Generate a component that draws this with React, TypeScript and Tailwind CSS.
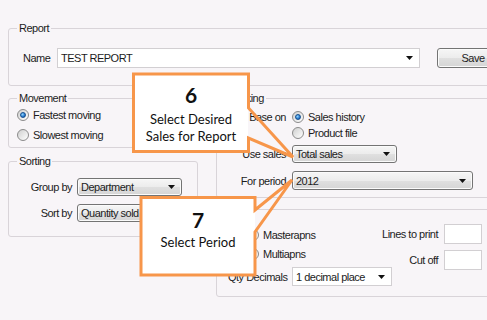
import React from "react";

const Arrow = () => (
  <svg width="7" height="4" viewBox="0 0 7 4" className="shrink-0">
    <path d="M0 0H7L3.5 4Z" fill="#111" />
  </svg>
);

const VCombo = ({ className, children }: { className: string; children: React.ReactNode }) => (
  <div
    className={`flex shrink-0 items-center justify-between rounded-[3px] border border-[#747474] bg-[linear-gradient(#f6f6f6_0%,#ececec_50%,#e0e0e0_50%,#d5d5d5_100%)] pl-[3px] pr-[6px] shadow-[inset_0_0_0_1px_#fbfbfb] ${className}`}
  >
    <span className="whitespace-nowrap">{children}</span>
    <Arrow />
  </div>
);

const WCombo = ({ className, children }: { className: string; children: React.ReactNode }) => (
  <div className={`flex shrink-0 items-center justify-between border border-[#d2cfd2] bg-white pl-[3px] pr-[6px] ${className}`}>
    <span className="whitespace-nowrap">{children}</span>
    <Arrow />
  </div>
);

const Radio = ({ checked }: { checked?: boolean }) => (
  <span className="flex h-[12px] w-[12px] shrink-0 items-center justify-center rounded-full border border-[#8b8b8b] bg-[linear-gradient(135deg,#cfcfcf,#ffffff)]">
    {checked && (
      <span className="h-[6px] w-[6px] rounded-full border border-[#164f8f] bg-[radial-gradient(circle_at_35%_35%,#8fd6ff,#2a7bd0_60%,#10478a)]" />
    )}
  </span>
);

const RadioRow = ({ checked, label, className }: { checked?: boolean; label: string; className: string }) => (
  <div className={`flex items-center gap-[4px] ${className}`}>
    <Radio checked={checked} />
    <span className="whitespace-nowrap">{label}</span>
  </div>
);

const Legend = ({ children }: { children: React.ReactNode }) => (
  <legend className="ml-[8px] px-[2px] leading-[14px]">{children}</legend>
);

export default function App() {
  return (
    <div className="relative h-[320px] w-[487px] overflow-hidden bg-[#f8f5f8] pl-[8px] pt-[21px] font-['Liberation_Sans',Arial,sans-serif] text-[11px] leading-[14px] tracking-[-0.5px] text-[#1c1c1c]">
      {/* Report */}
      <fieldset className="w-[520px] rounded-[3px] border border-[#d9d4d9]">
        <Legend>Report</Legend>
        <div className="flex items-center pb-[17px] pl-[14px] pt-[13px]">
          <span className="w-[34px]">Name</span>
          <WCombo className="h-[20px] w-[363px]">TEST REPORT</WCombo>
          <button className="ml-[17px] h-[20px] w-[72px] shrink-0 rounded-[3px] border border-[#747474] bg-[linear-gradient(#f6f6f6_0%,#ececec_50%,#e0e0e0_50%,#d5d5d5_100%)] shadow-[inset_0_0_0_1px_#fbfbfb]">
            Save
          </button>
        </div>
      </fieldset>

      <div className="mt-[5px] flex gap-[18px]">
        {/* Left column */}
        <div className="flex w-[190px] shrink-0 flex-col">
          <fieldset className="rounded-[3px] border border-[#d9d4d9]">
            <Legend>Movement</Legend>
            <div className="flex flex-col pb-[2px] pl-[8px]">
              <RadioRow checked label="Fastest moving" className="h-[20px]" />
              <RadioRow label="Slowest moving" className="h-[20px]" />
            </div>
          </fieldset>
          <fieldset className="mt-[6px] rounded-[3px] border border-[#d9d4d9]">
            <Legend>Sorting</Legend>
            <div className="flex flex-col gap-[8px] pb-[14px] pt-[10px]">
              <div className="flex items-center gap-[5px]">
                <span className="w-[63px] text-right">Group by</span>
                <VCombo className="h-[18px] w-[105px]">Department</VCombo>
              </div>
              <div className="flex items-center gap-[5px]">
                <span className="w-[63px] text-right">Sort by</span>
                <VCombo className="h-[18px] w-[105px]">Quantity sold</VCombo>
              </div>
            </div>
          </fieldset>
        </div>

        {/* Right column */}
        <div className="flex w-[300px] shrink-0 flex-col">
          <fieldset className="rounded-[3px] border border-[#d9d4d9]">
            <Legend>Ranking</Legend>
            <div className="flex flex-col pb-[7px] pt-[4px]">
              <div className="flex h-[16px] items-center gap-[6px]">
                <span className="w-[69px] text-right">Base on</span>
                <RadioRow checked label="Sales history" className="h-[16px]" />
              </div>
              <div className="flex h-[16px] items-center gap-[6px]">
                <span className="w-[69px]" />
                <RadioRow label="Product file" className="h-[16px]" />
              </div>
              <div className="mt-[4px] flex items-center gap-[6px]">
                <span className="w-[69px] text-right">Use sales</span>
                <VCombo className="h-[18px] w-[105px]">Total sales</VCombo>
              </div>
              <div className="mt-[8px] flex items-center gap-[6px]">
                <span className="w-[69px] text-right">For period</span>
                <VCombo className="h-[19px] w-[181px]">2012</VCombo>
              </div>
            </div>
          </fieldset>

          <fieldset className="mt-[11px] rounded-[3px] border border-[#d9d4d9]">
            <div className="flex">
              <div className="flex w-[154px] shrink-0 flex-col pb-[10px] pl-[11px] pt-[16px]">
                <RadioRow label="Masterapns" className="ml-[19px] h-[18px]" />
                <RadioRow label="Multiapns" className="ml-[19px] mt-[1px] h-[18px]" />
                <div className="mt-[4px] flex items-center gap-[5px]">
                  <span className="w-[59px] shrink-0 whitespace-nowrap text-right">Qty Decimals</span>
                  <WCombo className="h-[19px] w-[100px]">1 decimal place</WCombo>
                </div>
              </div>
              <div className="flex w-[111px] shrink-0 flex-col items-end gap-[6px] pt-[14px]">
                <div className="flex h-[20px] items-center gap-[6px]">
                  <span className="whitespace-nowrap">Lines to print</span>
                  <div className="h-[20px] w-[38px] border border-[#d2cfd2] bg-white" />
                </div>
                <div className="flex h-[20px] items-center gap-[6px]">
                  <span className="whitespace-nowrap">Cut off</span>
                  <div className="h-[20px] w-[38px] border border-[#d2cfd2] bg-white" />
                </div>
              </div>
            </div>
          </fieldset>
        </div>
      </div>

      {/* Callouts overlay */}
      <svg className="pointer-events-none absolute left-0 top-0" width="487" height="320" viewBox="0 0 487 320">
        <rect x="134" y="74" width="114" height="77" fill="#ffffff" />
        <path
          d="M133.5 74H248.5V108L293 157L248.5 138V151.5H133.5Z"
          fill="none"
          stroke="#f7964a"
          strokeWidth="3"
        />
        <rect x="141" y="198" width="114" height="77" fill="#ffffff" />
        <path
          d="M141 197.5H255V210L292 180L255 232V275H141Z"
          fill="none"
          stroke="#f7964a"
          strokeWidth="3"
        />
      </svg>

      <div className="absolute left-[134px] top-[73px] flex w-[114px] flex-col items-center font-['Lato',sans-serif] tracking-normal text-[#111]">
        <div className="mt-[10px] text-[21px] font-bold leading-[24px]">6</div>
        <div className="mt-[4px] text-[13px] leading-[17px]">Select Desired</div>
        <div className="text-[13px] leading-[17px]">Sales for Report</div>
      </div>

      <div className="absolute left-[141px] top-[197px] flex w-[114px] flex-col items-center font-['Lato',sans-serif] tracking-normal text-[#111]">
        <div className="mt-[11px] text-[21px] font-bold leading-[24px]">7</div>
        <div className="mt-[2px] text-[13px] leading-[17px]">Select Period</div>
      </div>
    </div>
  );
}
